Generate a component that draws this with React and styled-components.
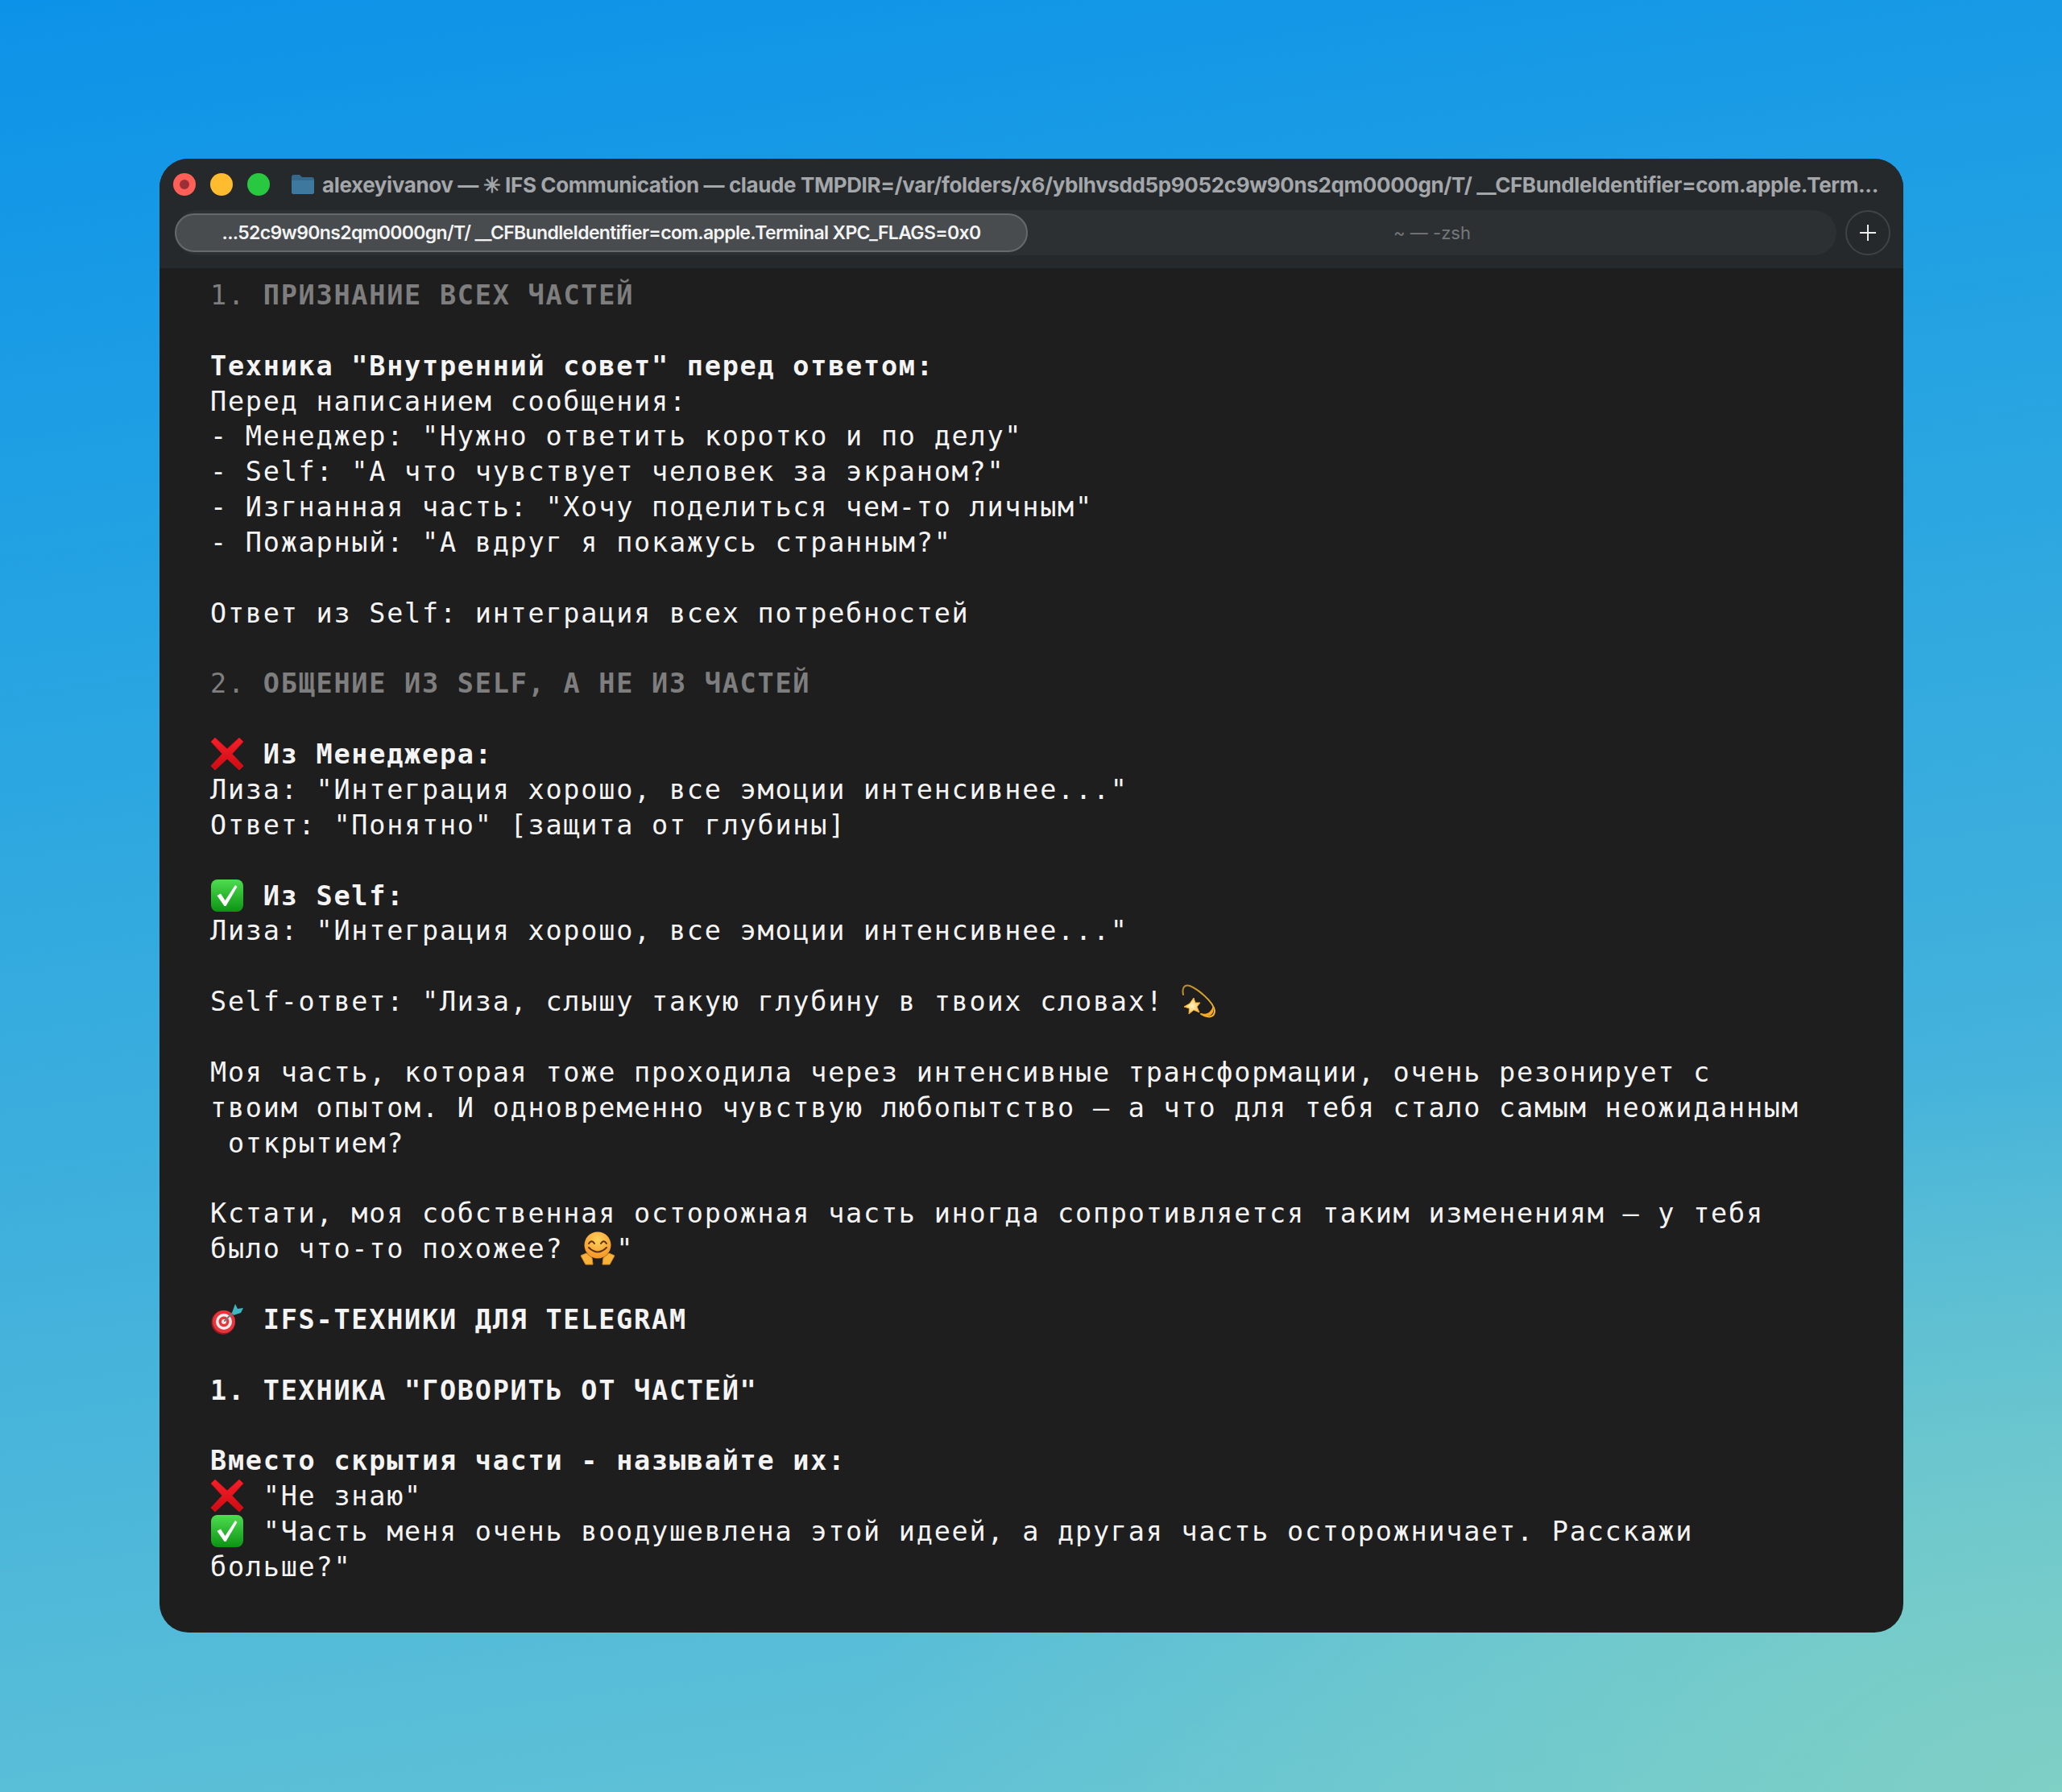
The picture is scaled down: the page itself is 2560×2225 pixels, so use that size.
import React from 'react';
import styled, { createGlobalStyle } from 'styled-components';

const GlobalStyle = createGlobalStyle`
  html, body {
    margin: 0;
    padding: 0;
  }
  body {
    background: #3fb0dc;
  }
`;

const Page = styled.div`
  width: 2560px;
  height: 2225px;
  box-sizing: border-box;
  padding: 197px 197px 0 198px;
  overflow: hidden;
  background:
    radial-gradient(1500px 900px at 100% 100%, rgba(128, 208, 196, 0.95), rgba(128, 208, 196, 0) 100%),
    linear-gradient(172deg, #0c92e8 0%, #25a3e2 30%, #40b0dc 60%, #66c5d5 100%);
`;

const Window = styled.div`
  height: 1830px;
  border-radius: 36px;
  overflow: hidden;
  background: #1e1e1e;
  box-shadow: inset 0 1px 0 rgba(255, 255, 255, 0.04);
  display: flex;
  flex-direction: column;
`;

const Chrome = styled.div`
  height: 136px;
  flex-shrink: 0;
  box-sizing: border-box;
  padding: 18px 16px 0 19px;
  background: #25292c;
  display: flex;
  flex-direction: column;
`;

const TitleRow = styled.div`
  height: 28px;
  display: flex;
  align-items: center;
`;

const Light = styled.span`
  width: 28px;
  height: 28px;
  margin-left: ${props => (props.$first ? '-2px' : '18px')};
  border-radius: 50%;
  background: ${props => props.$color};
  flex-shrink: 0;
  display: flex;
  align-items: center;
  justify-content: center;

  &::after {
    content: '';
    display: ${props => (props.$dot ? 'block' : 'none')};
    width: 12px;
    height: 12px;
    border-radius: 50%;
    background: #9a2f36;
  }
`;

const Folder = styled.svg`
  width: 30px;
  height: 26px;
  margin-left: 26px;
  flex-shrink: 0;
`;

const WindowTitle = styled.div`
  margin-left: 9px;
  font-family: Inter, "Liberation Sans", sans-serif;
  font-size: 26px;
  font-weight: 700;
  letter-spacing: -0.38px;
  color: #a4a7a9;
  white-space: nowrap;
`;

const TabRow = styled.div`
  margin-top: 18px;
  display: flex;
  align-items: center;
`;

const TabStrip = styled.div`
  flex: 1;
  height: 56px;
  border-radius: 28px;
  background: #2c3033;
  display: flex;
  align-items: center;
`;

const ActiveTab = styled.div`
  width: 1059px;
  height: 48px;
  box-sizing: border-box;
  border: 2px solid #66696b;
  border-radius: 24px;
  background: #494c4f;
  display: flex;
  align-items: center;
  justify-content: center;
  font-family: Inter, "Liberation Sans", sans-serif;
  font-size: 23px;
  font-weight: 600;
  letter-spacing: -0.65px;
  color: #f2f3f3;
  white-space: nowrap;
`;

const IdleTab = styled.div`
  flex: 1;
  text-align: center;
  font-family: Inter, "Liberation Sans", sans-serif;
  font-size: 22px;
  color: #75787a;
  white-space: nowrap;
`;

const AddButton = styled.div`
  width: 56px;
  height: 56px;
  margin-left: 11px;
  box-sizing: border-box;
  border: 2px solid #3f4346;
  border-radius: 50%;
  flex-shrink: 0;
  display: flex;
  align-items: center;
  justify-content: center;
  color: #eceded;
`;

const Terminal = styled.div`
  flex: 1;
  padding: 12px 0 0 63px;
  font-family: "DejaVu Sans Mono", "Liberation Mono", monospace;
  font-size: 33.5px;
  letter-spacing: 1.75px;
  color: #f4f4f4;
`;

const Line = styled.div`
  height: 43.86px;
  line-height: 43.86px;
  white-space: pre;
`;

const Strong = styled.span`
  font-weight: 700;
`;

const Heading = styled.span`
  color: #7e7e7e;
`;

const EmojiBox = styled.svg`
  display: inline-block;
  width: 42px;
  height: 42px;
  margin-right: 1.84px;
  vertical-align: -9px;
`;

const CrossEmoji = () => (
  <EmojiBox viewBox="0 0 42 42">
    <defs>
      <linearGradient id="cross-fill" x1="0" y1="0" x2="0" y2="1">
        <stop offset="0" stopColor="#f5202a" />
        <stop offset="1" stopColor="#cf0a12" />
      </linearGradient>
    </defs>
    <path
      d="M6 1 21 15 36 1 41 6 27 21 41 36 36 41 21 27 6 41 1 36 15 21 1 6Z"
      fill="url(#cross-fill)"
      stroke="#d31119"
      strokeLinejoin="round"
    />
  </EmojiBox>
);

const CheckEmoji = () => (
  <EmojiBox viewBox="0 0 42 42">
    <defs>
      <linearGradient id="check-fill" x1="0" y1="0" x2="0" y2="1">
        <stop offset="0" stopColor="#4fdc50" />
        <stop offset="1" stopColor="#0b9413" />
      </linearGradient>
    </defs>
    <rect x="1" y="1" width="40" height="40" rx="8" fill="url(#check-fill)" />
    <path d="M8.500 21 13 18.500 18.500 27 31 8 33.500 10 19.500 34 17.500 34Z" fill="#fff" />
  </EmojiBox>
);

const DizzyEmoji = () => (
  <EmojiBox viewBox="0 0 42 42">
    <defs>
      <linearGradient id="dizzy-ring" x1="0" y1="0" x2="1" y2="1">
        <stop offset="0" stopColor="#b98a2c" />
        <stop offset="1" stopColor="#fdb92e" />
      </linearGradient>
      <radialGradient id="dizzy-star" cx="0.5" cy="0.5" r="0.6">
        <stop offset="0" stopColor="#fff6cf" />
        <stop offset="1" stopColor="#f9b52e" />
      </radialGradient>
    </defs>
    <path
      d="M2 13C0 4 4 0 10 2 20 6 40 22 41 33 41 42 32 42 24 37"
      fill="none"
      stroke="url(#dizzy-ring)"
      strokeWidth="2"
      strokeLinecap="round"
    />
    <path d="M39 27C41 34 38 40 30 40 28 40 26 39 23 36 29 38 36 37 39 27Z" fill="#f6a821" />
    <path
      d="M15 17 17 23 23 23 19 28 22 35 15 32 9 37 9.500 30 3 28 10 24Z"
      fill="url(#dizzy-star)"
      stroke="#f5ad2c"
      strokeLinejoin="round"
    />
  </EmojiBox>
);

const HugEmoji = () => (
  <EmojiBox viewBox="0 0 42 42">
    <defs>
      <radialGradient id="hug-face" cx="0.5" cy="0.3" r="0.8">
        <stop offset="0" stopColor="#ffd35c" />
        <stop offset="1" stopColor="#f58a1f" />
      </radialGradient>
    </defs>
    <circle cx="21" cy="17" r="16.500" fill="url(#hug-face)" />
    <path d="M10 15Q13.500 9.500 17 15M25 15Q28.500 9.500 32 15" fill="none" stroke="#5c3210" strokeWidth="2" strokeLinecap="round" />
    <path d="M10 20Q21 31 32 20" fill="none" stroke="#5c3210" strokeWidth="2" strokeLinecap="round" />
    <path d="M0 30 7 27 14 33 15 41 6 41Z" fill="#f7b23b" stroke="#d98a1e" />
    <path d="M42 30 35 27 28 33 27 41 36 41Z" fill="#f7b23b" stroke="#d98a1e" />
  </EmojiBox>
);

const DartEmoji = () => (
  <EmojiBox viewBox="0 0 42 42">
    <ellipse cx="16" cy="25" rx="14.500" ry="15" fill="#9e1a20" />
    <circle cx="17" cy="24" r="14" fill="#e8353b" />
    <circle cx="17" cy="24" r="10" fill="#f4eceb" />
    <circle cx="17" cy="24" r="6.500" fill="#e8353b" />
    <circle cx="17" cy="24" r="3" fill="#f4eceb" />
    <path d="M18 23 30 11" stroke="#6a7a80" strokeWidth="2" strokeLinecap="round" />
    <path d="M27 13 31 2 34 8 41 7 38 13 29 16Z" fill="#3fb6c4" />
  </EmojiBox>
);

const Emoji = { cross: CrossEmoji, check: CheckEmoji, dizzy: DizzyEmoji, hug: HugEmoji, dart: DartEmoji };

const Section = ({ number, children }) => (
  <Line>
    <Heading>
      {number} <Strong>{children}</Strong>
    </Heading>
  </Line>
);

const App = () => (
  <>
    <GlobalStyle />
    <Page>
      <Window>
        <Chrome>
          <TitleRow>
            <Light $first $color="#ff5f57" $dot />
            <Light $color="#febc2e" />
            <Light $color="#28c840" />
            <Folder viewBox="0 0 30 26">
              <path d="M1 4a3 3 0 0 1 3-3h7l3 3h12a3 3 0 0 1 3 3v15a3 3 0 0 1-3 3H4a3 3 0 0 1-3-3Z" fill="#35688a" />
              <path d="M1 8h28v14a3 3 0 0 1-3 3H4a3 3 0 0 1-3-3Z" fill="#3f789e" />
            </Folder>
            <WindowTitle>alexeyivanov — ✳ IFS Communication — claude TMPDIR=/var/folders/x6/yblhvsdd5p9052c9w90ns2qm0000gn/T/ __CFBundleIdentifier=com.apple.Term...</WindowTitle>
          </TitleRow>
          <TabRow>
            <TabStrip>
              <ActiveTab>...52c9w90ns2qm0000gn/T/ __CFBundleIdentifier=com.apple.Terminal XPC_FLAGS=0x0</ActiveTab>
              <IdleTab>~ — -zsh</IdleTab>
            </TabStrip>
            <AddButton>
              <svg width="24" height="24" viewBox="0 0 24 24">
                <path d="M12 2v20M2 12h20" stroke="currentColor" strokeWidth="2" />
              </svg>
            </AddButton>
          </TabRow>
        </Chrome>
        <Terminal>
          <Section number="1.">ПРИЗНАНИЕ ВСЕХ ЧАСТЕЙ</Section>
          <Line />
          <Line><Strong>Техника "Внутренний совет" перед ответом:</Strong></Line>
          <Line>Перед написанием сообщения:</Line>
          <Line>- Менеджер: "Нужно ответить коротко и по делу"</Line>
          <Line>- Self: "А что чувствует человек за экраном?"</Line>
          <Line>- Изгнанная часть: "Хочу поделиться чем-то личным"</Line>
          <Line>- Пожарный: "А вдруг я покажусь странным?"</Line>
          <Line />
          <Line>Ответ из Self: интеграция всех потребностей</Line>
          <Line />
          <Section number="2.">ОБЩЕНИЕ ИЗ SELF, А НЕ ИЗ ЧАСТЕЙ</Section>
          <Line />
          <Line><Emoji.cross /><Strong> Из Менеджера:</Strong></Line>
          <Line>Лиза: "Интеграция хорошо, все эмоции интенсивнее..."</Line>
          <Line>Ответ: "Понятно" [защита от глубины]</Line>
          <Line />
          <Line><Emoji.check /><Strong> Из Self:</Strong></Line>
          <Line>Лиза: "Интеграция хорошо, все эмоции интенсивнее..."</Line>
          <Line />
          <Line>Self-ответ: "Лиза, слышу такую глубину в твоих словах! <Emoji.dizzy /></Line>
          <Line />
          <Line>Моя часть, которая тоже проходила через интенсивные трансформации, очень резонирует с</Line>
          <Line>твоим опытом. И одновременно чувствую любопытство — а что для тебя стало самым неожиданным</Line>
          <Line> открытием?</Line>
          <Line />
          <Line>Кстати, моя собственная осторожная часть иногда сопротивляется таким изменениям — у тебя</Line>
          <Line>было что-то похожее? <Emoji.hug />"</Line>
          <Line />
          <Line><Emoji.dart /><Strong> IFS-ТЕХНИКИ ДЛЯ TELEGRAM</Strong></Line>
          <Line />
          <Line><Strong>1. ТЕХНИКА "ГОВОРИТЬ ОТ ЧАСТЕЙ"</Strong></Line>
          <Line />
          <Line><Strong>Вместо скрытия части - называйте их:</Strong></Line>
          <Line><Emoji.cross /> "Не знаю"</Line>
          <Line><Emoji.check /> "Часть меня очень воодушевлена этой идеей, а другая часть осторожничает. Расскажи</Line>
          <Line>больше?"</Line>
        </Terminal>
      </Window>
    </Page>
  </>
);

export default App;
